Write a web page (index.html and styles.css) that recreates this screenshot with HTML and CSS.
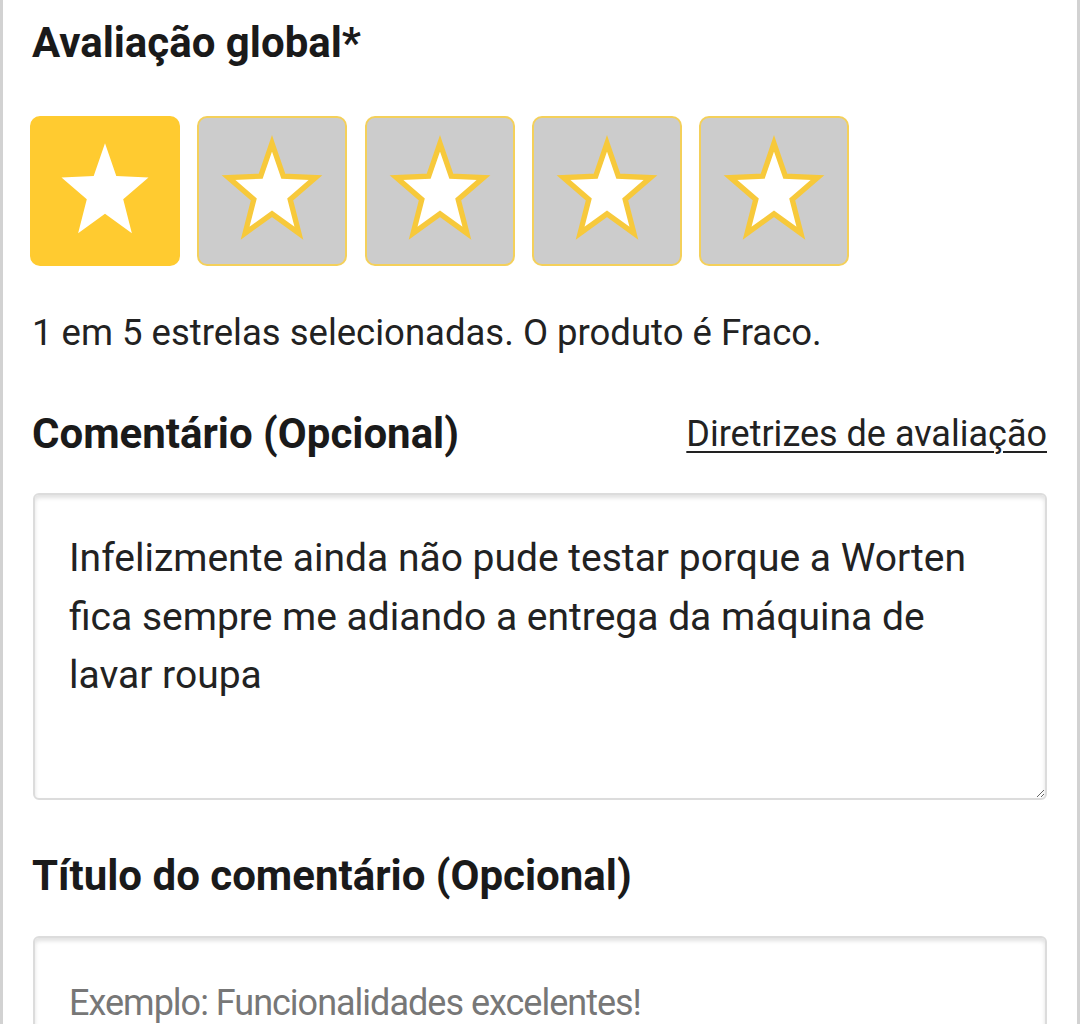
FILE: index.html
```html
<!DOCTYPE html>
<html lang="pt">
<head>
  <meta charset="UTF-8">
  <meta name="viewport" content="width=device-width, initial-scale=1.0">
  <title>Avaliação do produto</title>
  <link rel="stylesheet" href="styles.css">
</head>
<body>
  <div class="review-panel">
    <form class="review-form" name="review">
      <h2 class="field-title">Avaliação global*</h2>
      <div class="stars" role="radiogroup" aria-label="Avaliação global">
        <button type="button" class="star-box selected" aria-label="1 estrela">
          <svg viewBox="0 0 150 150"><polygon points="75,26 86.6,59.7 119.7,61.2 93.7,83.6 102.6,118.3 75,98.4 47.4,118.3 56.3,83.6 30.3,61.2 63.4,59.7"/></svg>
        </button>
        <button type="button" class="star-box" aria-label="2 estrelas">
          <svg viewBox="0 0 150 150"><polygon points="75,26 86.6,59.7 119.7,61.2 93.7,83.6 102.6,118.3 75,98.4 47.4,118.3 56.3,83.6 30.3,61.2 63.4,59.7"/></svg>
        </button>
        <button type="button" class="star-box" aria-label="3 estrelas">
          <svg viewBox="0 0 150 150"><polygon points="75,26 86.6,59.7 119.7,61.2 93.7,83.6 102.6,118.3 75,98.4 47.4,118.3 56.3,83.6 30.3,61.2 63.4,59.7"/></svg>
        </button>
        <button type="button" class="star-box" aria-label="4 estrelas">
          <svg viewBox="0 0 150 150"><polygon points="75,26 86.6,59.7 119.7,61.2 93.7,83.6 102.6,118.3 75,98.4 47.4,118.3 56.3,83.6 30.3,61.2 63.4,59.7"/></svg>
        </button>
        <button type="button" class="star-box" aria-label="5 estrelas">
          <svg viewBox="0 0 150 150"><polygon points="75,26 86.6,59.7 119.7,61.2 93.7,83.6 102.6,118.3 75,98.4 47.4,118.3 56.3,83.6 30.3,61.2 63.4,59.7"/></svg>
        </button>
      </div>
      <p class="rating-note">1 em 5 estrelas selecionadas. O produto é Fraco.</p>

      <div class="field-head">
        <label for="comment" class="field-title">Comentário (Opcional)</label>
        <a href="#" class="guide-link">Diretrizes de avaliação</a>
      </div>
      <textarea id="comment" name="comment" class="comment-box">Infelizmente ainda não pude testar porque a Worten fica sempre me adiando a entrega da máquina de lavar roupa</textarea>

      <label for="title" class="field-title title-label">Título do comentário (Opcional)</label>
      <input type="text" id="title" name="title" class="title-box" placeholder="Exemplo: Funcionalidades excelentes!">
    </form>
  </div>
</body>
</html>
```

FILE: styles.css
```css
body {
  margin: 0;
  font-family: Roboto, "Liberation Sans", sans-serif;
  color: #1c1c1c;
  background: #fff;
  overflow: hidden;
}
.review-panel {
  border-left: 3px solid #d2d2d2;
  border-right: 3px solid #d2d2d2;
  height: 1024px;
  box-sizing: border-box;
  padding: 0 30px 0 29px;
  overflow: hidden;
}
.review-form {
  display: flex;
  flex-direction: column;
}
.field-title {
  display: block;
  margin: 0;
  font-size: 42px;
  line-height: 50px;
  font-weight: 700;
  color: #1a1a1a;
}
.review-form > h2.field-title {
  margin-top: 18px;
}
.stars {
  display: flex;
  gap: 17.25px;
  margin: 48px 0 0 -2px;
}
.star-box {
  width: 150px;
  height: 150px;
  padding: 0;
  border: 2px solid #f4d05a;
  border-radius: 10px;
  background: #cccccc;
  cursor: pointer;
}
.star-box svg {
  display: block;
  width: 100%;
  height: 100%;
}
.star-box polygon {
  fill: #fff;
  stroke: #f7c93b;
  stroke-width: 5.5;
  stroke-linejoin: miter;
}
.star-box.selected {
  background: #ffcb30;
  border-color: #ffcb30;
}
.star-box.selected polygon {
  stroke: none;
}
.rating-note {
  margin: 45px 0 0;
  font-size: 36.5px;
  line-height: 44px;
  color: #222;
}
.field-head {
  display: flex;
  justify-content: space-between;
  align-items: center;
  margin-top: 54px;
}
.guide-link {
  font-size: 36px;
  line-height: 44px;
  color: #222;
  text-decoration: underline;
  text-underline-offset: 5px;
  text-decoration-thickness: 2px;
}
.comment-box {
  margin: 34px 0 0 1px;
  width: 1014px;
  height: 307px;
  box-sizing: border-box;
  padding: 34px 34px;
  border: 2px solid #dcdcdc;
  border-radius: 6px;
  box-shadow: inset 0 3px 4px rgba(0,0,0,0.12);
  font-family: Roboto, "Liberation Sans", sans-serif;
  font-size: 39px;
  line-height: 58.5px;
  color: #222;
  resize: vertical;
}
.title-label {
  margin-top: 51px;
}
.title-box {
  margin: 35px 0 0 1px;
  width: 1014px;
  box-sizing: border-box;
  padding: 43px 34px 50px;
  border: 2px solid #dcdcdc;
  border-radius: 6px;
  box-shadow: inset 0 3px 4px rgba(0,0,0,0.12);
  font-family: Roboto, "Liberation Sans", sans-serif;
  font-size: 36px;
  line-height: 44px;
  letter-spacing: -1px;
}
.title-box::placeholder {
  color: #777;
}
```
